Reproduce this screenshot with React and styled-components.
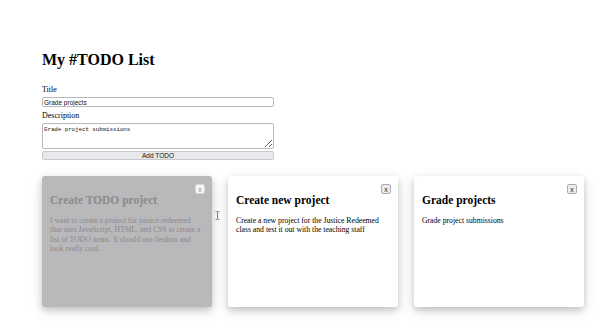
import React from 'react';
import styled, { createGlobalStyle } from 'styled-components';

const GlobalStyle = createGlobalStyle`
    body {
        margin: 0;
        background: #ffffff;
        font-family: 'Liberation Serif', 'Times New Roman', serif;
        color: #000;
    }
`

const Page = styled.div`
    position: relative;
    padding: 51px 0 0 42px;
    height: 322px;
    box-sizing: border-box;
`

const Heading = styled.h1`
    margin: 0;
    font-size: 16px;
    line-height: 18px;
    font-weight: 700;
`

const Form = styled.form`
    width: 232px;
    margin-top: 16px;
    display: flex;
    flex-direction: column;
`

const Label = styled.label`
    display: block;
    font-size: 8px;
    line-height: 9px;
    margin: ${props => props.first ? '0' : '4px'} 0 3px;
`

const TitleInput = styled.input`
    box-sizing: border-box;
    width: 100%;
    height: 10px;
    margin: 0;
    padding: 0 1px;
    border: 1px solid #b9b9b9;
    border-radius: 2px;
    font-family: 'Liberation Sans', Arial, sans-serif;
    font-size: 6.5px;
    color: #111;
    outline: none;
`

const DescInput = styled.textarea`
    box-sizing: border-box;
    width: 100%;
    height: 26px;
    margin: 0;
    padding: 2px 1px;
    border: 1px solid #b9b9b9;
    border-radius: 2px;
    font-family: 'Liberation Mono', 'Courier New', monospace;
    font-size: 5.75px;
    color: #111;
    outline: none;
`

const AddButton = styled.button`
    box-sizing: border-box;
    width: 100%;
    height: 9.5px;
    margin-top: 1.5px;
    padding: 0;
    background: #e9e9ed;
    border: 1px solid #c9c9cf;
    border-radius: 2px;
    font-family: 'Liberation Sans', Arial, sans-serif;
    font-size: 6.5px;
    line-height: 7px;
    color: #111;
`

const CardRow = styled.div`
    display: flex;
    gap: 16px;
    margin-top: 16px;
`

const Card = styled.div`
    box-sizing: border-box;
    width: 170px;
    height: 131px;
    padding: 8px 10px 8px 8px;
    border-radius: 3px;
    background: ${props => props.faded ? '#b9b8ba' : '#ffffff'};
    color: ${props => props.faded ? '#8b8a8c' : '#000000'};
    box-shadow: 0 3px 6px rgba(0, 0, 0, 0.16), 0 4px 14px rgba(0, 0, 0, 0.12);
`

const CloseRow = styled.div`
    display: flex;
    justify-content: flex-end;
    margin-right: -3px;
`

const CloseButton = styled.button`
    box-sizing: border-box;
    width: 10px;
    height: 10px;
    padding: 0;
    border-radius: 2px;
    border: 1px solid ${props => props.faded ? '#d6d6d6' : '#a9a9b0'};
    background: ${props => props.faded ? '#f6f6f6' : '#ececef'};
    color: ${props => props.faded ? '#8a8a8a' : '#222'};
    font-family: 'Liberation Sans', Arial, sans-serif;
    font-size: 7px;
    line-height: 7px;
`

const CardTitle = styled.h2`
    margin: 0;
    font-size: 11.5px;
    line-height: 13px;
    font-weight: 700;
`

const CardText = styled.p`
    margin: 9px 0 0;
    font-size: 7.7px;
    line-height: 9.3px;
`

const Cursor = styled.svg`
    position: absolute;
    left: 215px;
    top: 211px;
`

const todos = [
    {
        title: 'Create TODO project',
        description: 'I want to create a project for justice redeemed that uses JavaScript, HTML, and CSS to create a list of TODO items. It should use flexbox and look really cool.',
        faded: true
    },
    {
        title: 'Create new project',
        description: 'Create a new project for the Justice Redeemed class and test it out with the teaching staff'
    },
    {
        title: 'Grade projects',
        description: 'Grade project submissions'
    }
]

const App = () => {
    return (
        <Page>
            <GlobalStyle />
            <Heading>My #TODO List</Heading>
            <Form onSubmit={e => e.preventDefault()}>
                <Label first>Title</Label>
                <TitleInput defaultValue="Grade projects" />
                <Label>Description</Label>
                <DescInput defaultValue="Grade project submissions" />
                <AddButton type="submit">Add TODO</AddButton>
            </Form>
            <CardRow>
                {todos.map(todo => (
                    <Card key={todo.title} faded={todo.faded}>
                        <CloseRow>
                            <CloseButton faded={todo.faded}>x</CloseButton>
                        </CloseRow>
                        <CardTitle>{todo.title}</CardTitle>
                        <CardText>{todo.description}</CardText>
                    </Card>
                ))}
            </CardRow>
            <Cursor width="5" height="9" viewBox="0 0 5 9">
                <path d="M0.5 0.5 H1.8 L2.5 1.2 L3.2 0.5 H4.5 M2.5 1.2 V7.8 M0.5 8.5 H1.8 L2.5 7.8 L3.2 8.5 H4.5" stroke="#555" strokeWidth="0.8" fill="none" />
            </Cursor>
        </Page>
    )
}

export default App;
